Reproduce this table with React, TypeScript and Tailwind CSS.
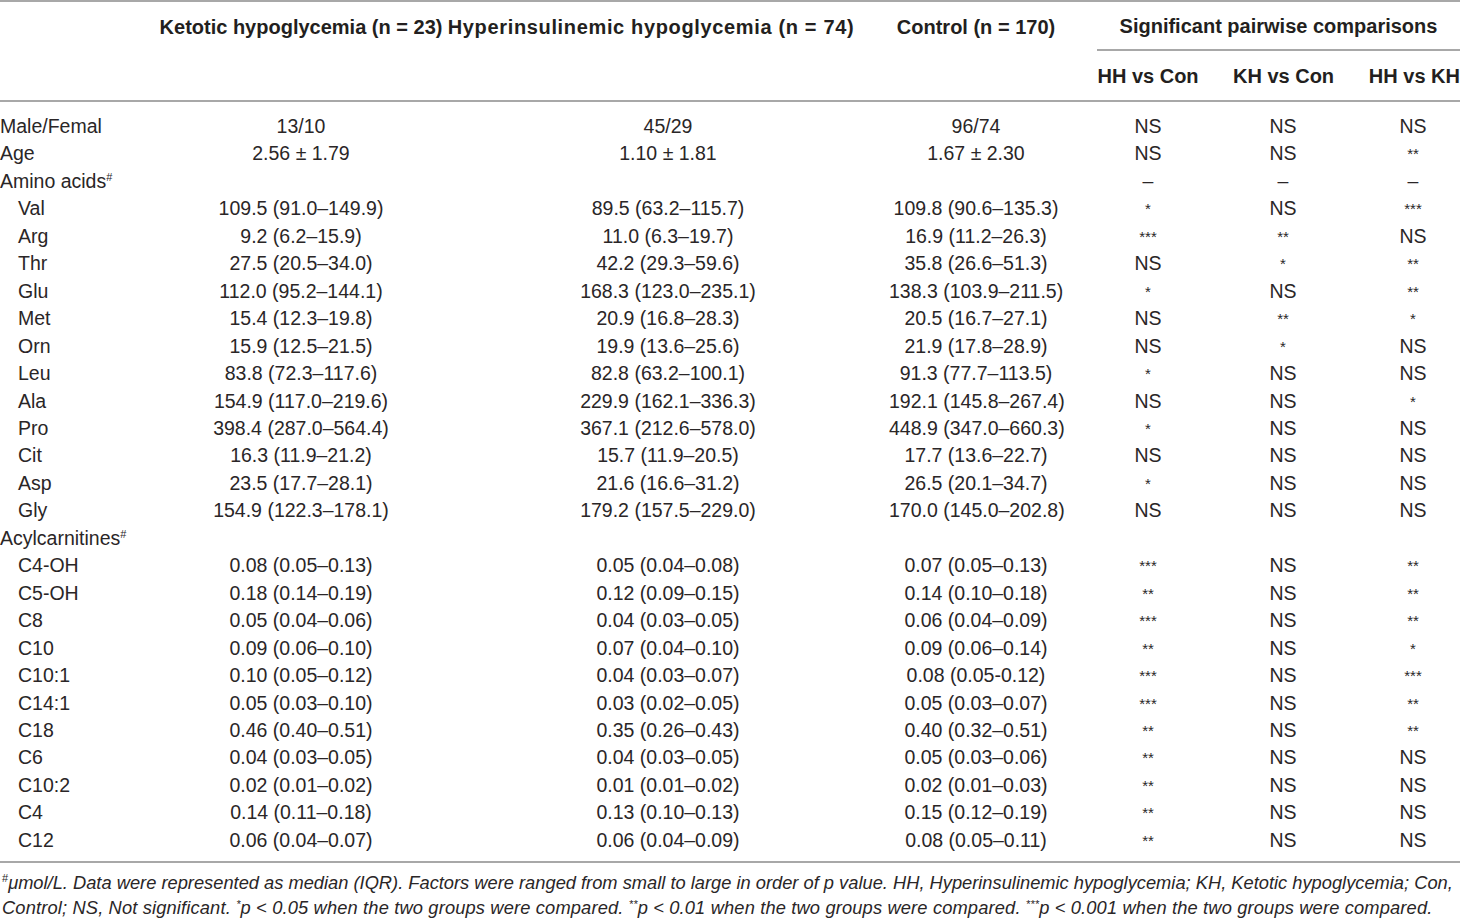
import React from "react";

type Row = { label: string; sub?: boolean; sup?: boolean; kh?: string; hh?: string; con?: string; p?: [string, string, string] };

const ROWS: Row[] = [
  { label: "Male/Femal", kh: "13/10", hh: "45/29", con: "96/74", p: ["NS", "NS", "NS"] },
  { label: "Age", kh: "2.56 ± 1.79", hh: "1.10 ± 1.81", con: "1.67 ± 2.30", p: ["NS", "NS", "**"] },
  { label: "Amino acids", sup: true, p: ["–", "–", "–"] },
  { label: "Val", sub: true, kh: "109.5 (91.0–149.9)", hh: "89.5 (63.2–115.7)", con: "109.8 (90.6–135.3)", p: ["*", "NS", "***"] },
  { label: "Arg", sub: true, kh: "9.2 (6.2–15.9)", hh: "11.0 (6.3–19.7)", con: "16.9 (11.2–26.3)", p: ["***", "**", "NS"] },
  { label: "Thr", sub: true, kh: "27.5 (20.5–34.0)", hh: "42.2 (29.3–59.6)", con: "35.8 (26.6–51.3)", p: ["NS", "*", "**"] },
  { label: "Glu", sub: true, kh: "112.0 (95.2–144.1)", hh: "168.3 (123.0–235.1)", con: "138.3 (103.9–211.5)", p: ["*", "NS", "**"] },
  { label: "Met", sub: true, kh: "15.4 (12.3–19.8)", hh: "20.9 (16.8–28.3)", con: "20.5 (16.7–27.1)", p: ["NS", "**", "*"] },
  { label: "Orn", sub: true, kh: "15.9 (12.5–21.5)", hh: "19.9 (13.6–25.6)", con: "21.9 (17.8–28.9)", p: ["NS", "*", "NS"] },
  { label: "Leu", sub: true, kh: "83.8 (72.3–117.6)", hh: "82.8 (63.2–100.1)", con: "91.3 (77.7–113.5)", p: ["*", "NS", "NS"] },
  { label: "Ala", sub: true, kh: "154.9 (117.0–219.6)", hh: "229.9 (162.1–336.3)", con: "192.1 (145.8–267.4)", p: ["NS", "NS", "*"] },
  { label: "Pro", sub: true, kh: "398.4 (287.0–564.4)", hh: "367.1 (212.6–578.0)", con: "448.9 (347.0–660.3)", p: ["*", "NS", "NS"] },
  { label: "Cit", sub: true, kh: "16.3 (11.9–21.2)", hh: "15.7 (11.9–20.5)", con: "17.7 (13.6–22.7)", p: ["NS", "NS", "NS"] },
  { label: "Asp", sub: true, kh: "23.5 (17.7–28.1)", hh: "21.6 (16.6–31.2)", con: "26.5 (20.1–34.7)", p: ["*", "NS", "NS"] },
  { label: "Gly", sub: true, kh: "154.9 (122.3–178.1)", hh: "179.2 (157.5–229.0)", con: "170.0 (145.0–202.8)", p: ["NS", "NS", "NS"] },
  { label: "Acylcarnitines", sup: true },
  { label: "C4-OH", sub: true, kh: "0.08 (0.05–0.13)", hh: "0.05 (0.04–0.08)", con: "0.07 (0.05–0.13)", p: ["***", "NS", "**"] },
  { label: "C5-OH", sub: true, kh: "0.18 (0.14–0.19)", hh: "0.12 (0.09–0.15)", con: "0.14 (0.10–0.18)", p: ["**", "NS", "**"] },
  { label: "C8", sub: true, kh: "0.05 (0.04–0.06)", hh: "0.04 (0.03–0.05)", con: "0.06 (0.04–0.09)", p: ["***", "NS", "**"] },
  { label: "C10", sub: true, kh: "0.09 (0.06–0.10)", hh: "0.07 (0.04–0.10)", con: "0.09 (0.06–0.14)", p: ["**", "NS", "*"] },
  { label: "C10:1", sub: true, kh: "0.10 (0.05–0.12)", hh: "0.04 (0.03–0.07)", con: "0.08 (0.05-0.12)", p: ["***", "NS", "***"] },
  { label: "C14:1", sub: true, kh: "0.05 (0.03–0.10)", hh: "0.03 (0.02–0.05)", con: "0.05 (0.03–0.07)", p: ["***", "NS", "**"] },
  { label: "C18", sub: true, kh: "0.46 (0.40–0.51)", hh: "0.35 (0.26–0.43)", con: "0.40 (0.32–0.51)", p: ["**", "NS", "**"] },
  { label: "C6", sub: true, kh: "0.04 (0.03–0.05)", hh: "0.04 (0.03–0.05)", con: "0.05 (0.03–0.06)", p: ["**", "NS", "NS"] },
  { label: "C10:2", sub: true, kh: "0.02 (0.01–0.02)", hh: "0.01 (0.01–0.02)", con: "0.02 (0.01–0.03)", p: ["**", "NS", "NS"] },
  { label: "C4", sub: true, kh: "0.14 (0.11–0.18)", hh: "0.13 (0.10–0.13)", con: "0.15 (0.12–0.19)", p: ["**", "NS", "NS"] },
  { label: "C12", sub: true, kh: "0.06 (0.04–0.07)", hh: "0.06 (0.04–0.09)", con: "0.08 (0.05–0.11)", p: ["**", "NS", "NS"] },
];

const GRID = "grid grid-cols-[155px_292px_442px_174px_170px_100px_127px]";

function Sig({ v }: { v?: string }) {
  if (!v) return null;
  if (v.startsWith("*")) return <span className="text-[15px] relative -top-[1px]">{v}</span>;
  return <span>{v}</span>;
}

export default function App() {
  return (
    <div className="w-[1460px] h-[921px] bg-white text-[#2a2627] text-[19.5px] overflow-hidden" style={{ fontFamily: '"Liberation Sans", Arial, sans-serif' }}>
      {/* Header */}
      <div className={`${GRID} grid-rows-[49px_49px] border-t-2 border-b-2 border-[#a8a8a8] font-bold text-[20px] text-[#231f20] whitespace-nowrap`}>
        <div />
        <div className="flex items-center justify-center">Ketotic hypoglycemia (n = 23)</div>
        <div className="flex items-center justify-center pr-[34px] tracking-[0.65px]">Hyperinsulinemic hypoglycemia (n = 74)</div>
        <div className="flex items-center justify-center">Control (n = 170)</div>
        <div className="col-span-3 pl-[34px]">
          <div className="h-full flex items-center justify-center border-b-2 border-[#a8a8a8]">Significant pairwise comparisons</div>
        </div>
        <div className="col-span-4" />
        <div className="flex items-center justify-center">HH vs Con</div>
        <div className="flex items-center justify-center pl-[36px] pr-[35px]">KH vs Con</div>
        <div className="flex items-center justify-end">HH vs KH</div>
      </div>

      {/* Body */}
      <div className="pt-[10px] pb-[8px] border-b-2 border-[#a8a8a8] whitespace-nowrap">
        {ROWS.map((r) => (
          <div key={r.label} className={`${GRID} h-[27.46px] items-center`}>
            <div className={r.sub ? "pl-[18px]" : ""}>
              {r.label}
              {r.sup && <sup className="text-[11px] -top-[7px]">#</sup>}
            </div>
            <div className="text-center">{r.kh}</div>
            <div className="text-center">{r.hh}</div>
            <div className="text-center">{r.con}</div>
            <div className="text-center"><Sig v={r.p?.[0]} /></div>
            <div className="text-center"><Sig v={r.p?.[1]} /></div>
            <div className="text-center pl-[33px]"><Sig v={r.p?.[2]} /></div>
          </div>
        ))}
      </div>

      {/* Footnote */}
      <div className="pt-[7px] pl-[2px] italic text-[18.3px] leading-[25px] whitespace-nowrap">
        <div>
          <sup className="text-[11px] -top-[7px] not-italic">#</sup>
          μmol/L. Data were represented as median (IQR). Factors were ranged from small to large in order of p value. HH, Hyperinsulinemic hypoglycemia; KH, Ketotic hypoglycemia; Con,
        </div>
        <div className="tracking-[0.15px]">
          Control; NS, Not significant. <sup className="text-[11px] -top-[6px]">*</sup>p &lt; 0.05 when the two groups were compared. <sup className="text-[11px] -top-[6px]">**</sup>p &lt; 0.01 when the two groups were compared. <sup className="text-[11px] -top-[6px]">***</sup>p &lt; 0.001 when the two groups were compared.
        </div>
      </div>
    </div>
  );
}
